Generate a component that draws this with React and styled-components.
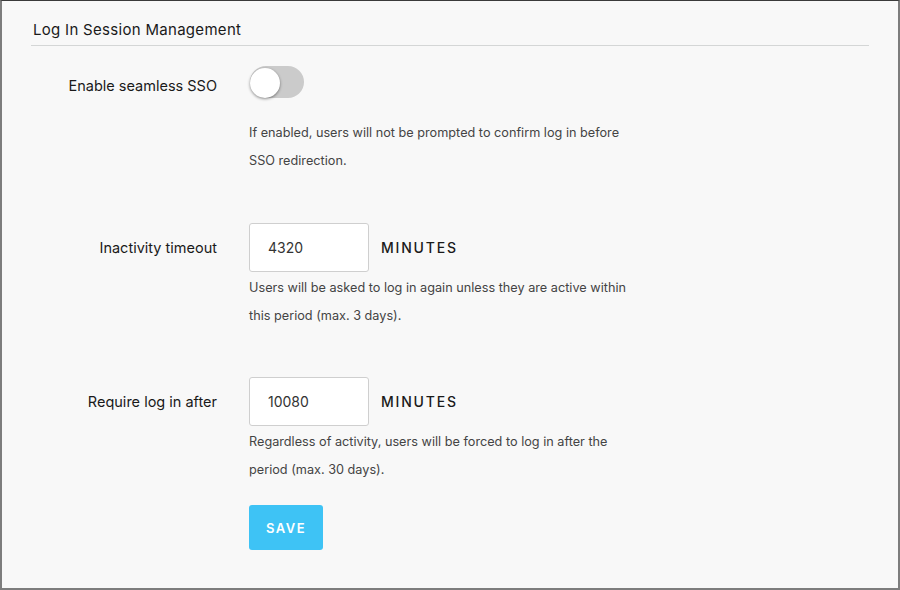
import React, { useState } from 'react'
import styled, { createGlobalStyle } from 'styled-components'

const GlobalStyle = createGlobalStyle`
  html, body {
    margin: 0;
    padding: 0;
    background: #f8f8f8;
  }
  * {
    box-sizing: border-box;
  }
`

const Frame = styled.div`
  width: 900px;
  height: 590px;
  background: #f8f8f8;
  border: 2px solid #7d7d7d;
  border-top: 1px solid #3a3a3a;
  font-family: Inter, "Open Sans", sans-serif;
  color: #222;
  padding: 0 29px 0 29px;
`

const Heading = styled.h2`
  margin: 0;
  padding: 20px 0 6px 2px;
  font-size: 15px;
  font-weight: 400;
  letter-spacing: 0.3px;
  line-height: 18px;
  color: #1a1a1a;
  border-bottom: 1px solid #d4d6d6;
`

const Form = styled.div`
  padding-top: 20px;
`

const Row = styled.div`
  display: grid;
  grid-template-columns: 186px 1fr;
  column-gap: 32px;
  margin-top: ${(p) => p.$top || 0}px;
`

const Label = styled.div`
  text-align: right;
  font-size: 14.5px;
  font-weight: 400;
  line-height: ${(p) => p.$height || 49}px;
  padding-top: ${(p) => p.$offset || 0}px;
  color: #1a1a1a;
`

const Control = styled.div`
  display: flex;
  flex-direction: column;
  align-items: flex-start;
`

const Inline = styled.div`
  display: flex;
  align-items: center;
  gap: 12px;
`

const Track = styled.button`
  position: relative;
  width: 54px;
  height: 32px;
  border: none;
  border-radius: 16px;
  background: ${(p) => (p.$on ? '#3ec3f5' : '#cbcbcb')};
  padding: 0;
  cursor: pointer;
  margin-left: 1px;
`

const Knob = styled.span`
  position: absolute;
  top: 2px;
  left: ${(p) => (p.$on ? '24px' : '0')};
  width: 30px;
  height: 30px;
  border-radius: 50%;
  background: #fff;
  box-shadow: 0 1px 3px rgba(0, 0, 0, 0.45);
`

const Help = styled.p`
  margin: ${(p) => p.$top || 2}px 0 0 0;
  font-size: 12.7px;
  line-height: 28px;
  color: #444;
  max-width: 385px;
`

const Field = styled.input`
  width: 120px;
  height: 49px;
  border: 1px solid #cfcfcf;
  border-radius: 3px;
  background: #fff;
  padding: 0 18px;
  font-family: inherit;
  font-size: 14px;
  color: #333;
  outline: none;
`

const Unit = styled.span`
  font-size: 14px;
  font-weight: 500;
  letter-spacing: 1.8px;
  color: #1a1a1a;
`

const SaveButton = styled.button`
  margin-top: 21px;
  width: 74px;
  height: 45px;
  border: none;
  border-radius: 3px;
  background: #3ec3f5;
  color: #fff;
  font-family: inherit;
  font-size: 13px;
  font-weight: 600;
  letter-spacing: 1.5px;
  cursor: pointer;
`

function App() {
  const [sso, setSso] = useState(false)
  const [timeout, setTimeoutValue] = useState('4320')
  const [maxAge, setMaxAge] = useState('10080')

  return (
    <>
      <GlobalStyle />
      <Frame>
        <Heading>Log In Session Management</Heading>
        <Form>
          <Row>
            <Label $height={32} $offset={4}>Enable seamless SSO</Label>
            <Control>
              <Track $on={sso} onClick={() => setSso(!sso)}>
                <Knob $on={sso} />
              </Track>
              <Help $top={21}>
                If enabled, users will not be prompted to confirm log in before
                SSO redirection.
              </Help>
            </Control>
          </Row>

          <Row $top={48}>
            <Label>Inactivity timeout</Label>
            <Control>
              <Inline>
                <Field value={timeout} onChange={(e) => setTimeoutValue(e.target.value)} />
                <Unit>MINUTES</Unit>
              </Inline>
              <Help>
                Users will be asked to log in again unless they are active within
                this period (max. 3 days).
              </Help>
            </Control>
          </Row>

          <Row $top={47}>
            <Label>Require log in after</Label>
            <Control>
              <Inline>
                <Field value={maxAge} onChange={(e) => setMaxAge(e.target.value)} />
                <Unit>MINUTES</Unit>
              </Inline>
              <Help>
                Regardless of activity, users will be forced to log in after the
                period (max. 30 days).
              </Help>
              <SaveButton>SAVE</SaveButton>
            </Control>
          </Row>
        </Form>
      </Frame>
    </>
  )
}

export default App
